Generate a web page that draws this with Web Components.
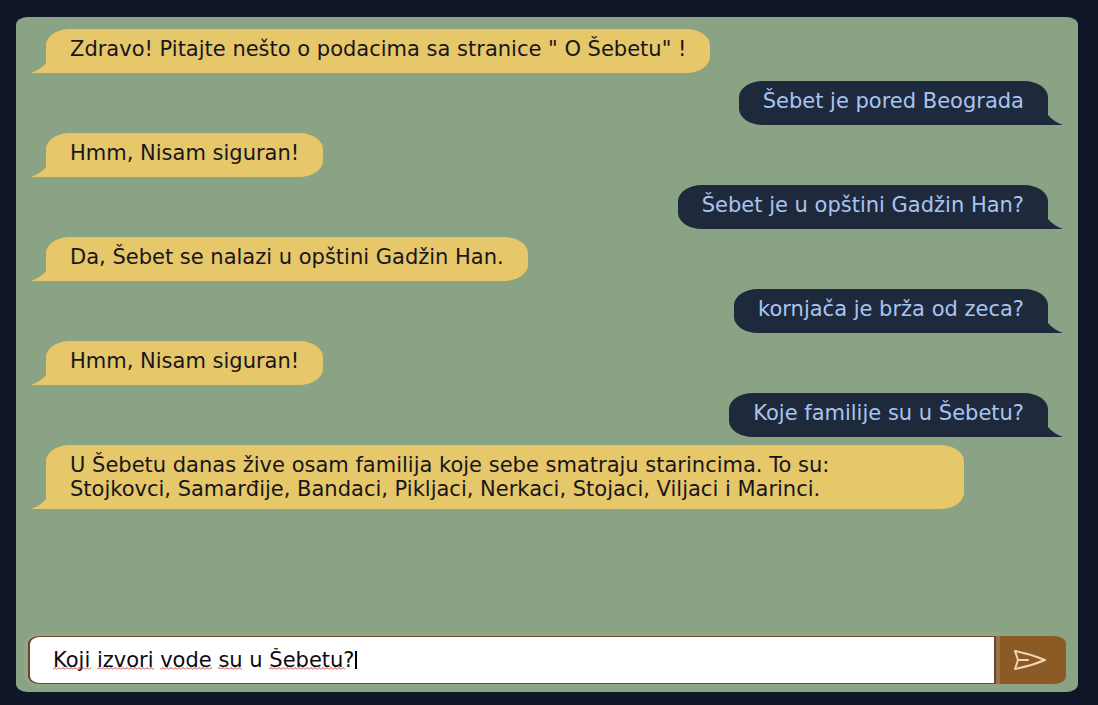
<!DOCTYPE html>
<html lang="sr-Latn">
<head>
<meta charset="utf-8">
<meta name="viewport" content="width=device-width, initial-scale=1">
<title>Šebet chat</title>
<style>
  html, body { height: 100%; }
  body {
    margin: 0;
    box-sizing: border-box;
    padding: 17px 20px 13px 16px;
    background: #0f1628;
    font-family: "DejaVu Sans", sans-serif;
    font-size: 21px;
    line-height: 24px;
  }
</style>
</head>
<body>
<chat-panel>
  <chat-message>Zdravo! Pitajte nešto o podacima sa stranice " O Šebetu" !</chat-message>
  <chat-message own>Šebet je pored Beograda</chat-message>
  <chat-message>Hmm, Nisam siguran!</chat-message>
  <chat-message own>Šebet je u opštini Gadžin Han?</chat-message>
  <chat-message>Da, Šebet se nalazi u opštini Gadžin Han.</chat-message>
  <chat-message own>kornjača je brža od zeca?</chat-message>
  <chat-message>Hmm, Nisam siguran!</chat-message>
  <chat-message own>Koje familije su u Šebetu?</chat-message>
  <chat-message wide>U Šebetu danas žive osam familija koje sebe smatraju starincima. To su:<br>Stojkovci, Samarđije, Bandaci, Pikljaci, Nerkaci, Stojaci, Viljaci i Marinci.</chat-message>
  <chat-composer slot="composer"></chat-composer>
</chat-panel>
<script>
class ChatPanel extends HTMLElement {
  constructor() {
    super();
    this.attachShadow({ mode: 'open' }).innerHTML = `
      <style>
        :host {
          display: flex; flex-direction: column; box-sizing: border-box;
          min-height: 100%; padding: 12px 12px 8px;
          background: #8aa384; border-radius: 12px / 8px;
        }
        main { flex: 1; display: flex; flex-direction: column; gap: 8px; padding: 0 18px 16px; }
      </style>
      <main><slot></slot></main>
      <slot name="composer"></slot>`;
  }
}
class ChatMessage extends HTMLElement {
  constructor() {
    super();
    this.attachShadow({ mode: 'open' }).innerHTML = `
      <style>
        :host {
          display: block; position: relative; box-sizing: border-box;
          align-self: flex-start; max-width: 918px; min-height: 44px; padding: 8px 24px;
          color: #18161c; background: #e6c769;
          border-radius: 24px 24px 24px 0 / 16px 16px 16px 0;
        }
        :host([wide]) { width: 100%; }
        :host([own]) {
          align-self: flex-end; color: #a9c4f0; background: #1e293b;
          border-radius: 24px 24px 0 24px / 16px 16px 0 16px;
        }
        svg { position: absolute; bottom: 0; right: 100%; fill: #e6c769; }
        :host([own]) svg { right: auto; left: 100%; fill: #1e293b; transform: scaleX(-1); }
      </style>
      <slot></slot>
      <svg width="15" height="12" viewBox="0 0 15 12" aria-hidden="true"><path d="M15 0V2Q9 9 0 12H15Z"/></svg>`;
  }
}
class ChatComposer extends HTMLElement {
  constructor() {
    super();
    this.attachShadow({ mode: 'open' }).innerHTML = `
      <style>
        :host { display: block; }
        form { display: flex; height: 48px; margin: 0; }
        .field { flex: 1; position: relative; display: flex; min-width: 0; }
        input {
          flex: 1; min-width: 0; box-sizing: border-box; margin: 0; padding: 0 23px;
          font: inherit; color: #0c0c10; background: #fff;
          border: 1px solid #6e4330; border-left-width: 2px; border-right-width: 2px;
          border-radius: 12px 0 0 12px / 8px 0 0 8px; outline: none;
          box-shadow: 0 0 0 4px rgba(168, 172, 142, .25);
        }
        .marks { position: absolute; left: 25px; top: 13px; pointer-events: none; }
        button {
          width: 70px; padding: 0 6px 0 0; border: 0; border-left: 4px solid #91602f;
          display: grid; place-items: center; background: #8b5a25;
          border-radius: 0 12px 12px 0 / 0 8px 8px 0;
        }
      </style>
      <form>
        <div class="field">
          <input type="text" aria-label="Pitanje" value="Koji izvori vode su u Šebetu?" spellcheck="false">
          <svg class="marks" width="320" height="24" aria-hidden="true">
            <defs><pattern id="wave" width="4" height="3" patternUnits="userSpaceOnUse">
              <path d="M0 2.5L2 .5L4 2.5" fill="none" stroke="#d23a3a"/></pattern></defs>
            <g fill="url(#wave)">
              <rect x="0" y="18" width="38" height="3"/><rect x="44" y="18" width="57" height="3"/>
              <rect x="107" y="18" width="52" height="3"/><rect x="165" y="18" width="24" height="3"/>
              <rect x="216" y="18" width="76" height="3"/>
            </g>
            <rect x="302" y="2" width="2" height="18" fill="#000"/>
          </svg>
        </div>
        <button type="submit" aria-label="Pošalji">
          <svg width="34" height="22" viewBox="0 0 34 22" fill="none" stroke="#f0d4b4" stroke-width="2" stroke-linejoin="round" stroke-linecap="round" aria-hidden="true">
            <path d="M5 11L2 2Q18 5 32 11Q18 17 2 20ZM5 11H15"/>
          </svg>
        </button>
      </form>`;
    this.shadowRoot.querySelector('form').addEventListener('submit', e => e.preventDefault());
  }
}
customElements.define('chat-panel', ChatPanel);
customElements.define('chat-message', ChatMessage);
customElements.define('chat-composer', ChatComposer);
</script>
</body>
</html>
